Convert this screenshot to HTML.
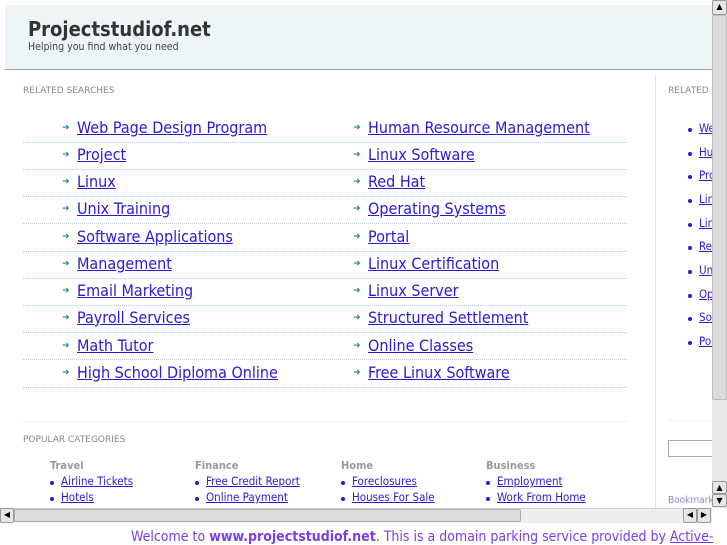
<!DOCTYPE html>
<html><head><style>
*{margin:0;padding:0;box-sizing:border-box}
body{width:727px;height:545px;overflow:hidden;background:#fff;font-family:"DejaVu Sans","Liberation Sans",sans-serif;position:relative}
.a{position:absolute;white-space:nowrap}
.c{font-family:"DejaVu Sans Condensed","DejaVu Sans",sans-serif}
.hdr{left:5px;top:5px;width:707px;height:65px;background:#eef5f7;border-bottom:1px solid #8fa3cf}
.lk{color:#2a1bd0;text-decoration:underline;font-size:16px;font-weight:500;font-family:"DejaVu Sans Condensed","DejaVu Sans",sans-serif;margin-top:-1px}
.arr{color:#2a8a80;font-size:9px}
.sep{height:0;border-top:1px dotted #b8c8e6;left:23px;width:604px}
.lbl{font-size:9px;color:#888}
.sl{color:#2a1bd0;text-decoration:underline;font-size:11.5px;font-family:"DejaVu Sans Condensed","DejaVu Sans",sans-serif}
.dot{width:4px;height:4px;border-radius:50%;background:#2a1bd0}
.cat{font-size:11px;color:#999;font-weight:bold}
.btn{background:#e6e6e6;border:1px solid #999;border-radius:2px;font-size:8px;text-align:center;color:#000;line-height:12px}
</style></head><body>
<div class="a hdr"></div>
<div class="a c" style="left:28px;top:17px;font-size:20px;font-weight:bold;color:#333">Projectstudiof.net</div>
<div class="a c" style="left:28px;top:41px;font-size:10.5px;color:#444">Helping you find what you need</div>
<div class="a lbl" style="left:23px;top:86px">RELATED SEARCHES</div>
<div class="a" style="left:655px;top:75px;width:1px;height:433px;background:#dde4f2"></div>
<div class="a lbl" style="left:668px;top:86px">RELATED</div>

<div class="a sep" style="top:142px"></div><div class="a sep" style="top:169px"></div><div class="a sep" style="top:196px"></div><div class="a sep" style="top:223px"></div><div class="a sep" style="top:251px"></div><div class="a sep" style="top:278px"></div><div class="a sep" style="top:305px"></div><div class="a sep" style="top:332px"></div><div class="a sep" style="top:359px"></div><div class="a sep" style="top:387px"></div>
<div class="a sep" style="top:421px;border-top:1px solid #eef2f8"></div>

<div class="a arr" style="left:62px;top:123px">➜</div><div class="a lk" style="left:77px;top:119px">Web Page Design Program</div>
<div class="a arr" style="left:62px;top:150px">➜</div><div class="a lk" style="left:77px;top:146px">Project</div>
<div class="a arr" style="left:62px;top:177px">➜</div><div class="a lk" style="left:77px;top:173px">Linux</div>
<div class="a arr" style="left:62px;top:204px">➜</div><div class="a lk" style="left:77px;top:200px">Unix Training</div>
<div class="a arr" style="left:62px;top:232px">➜</div><div class="a lk" style="left:77px;top:228px">Software Applications</div>
<div class="a arr" style="left:62px;top:259px">➜</div><div class="a lk" style="left:77px;top:255px">Management</div>
<div class="a arr" style="left:62px;top:286px">➜</div><div class="a lk" style="left:77px;top:282px">Email Marketing</div>
<div class="a arr" style="left:62px;top:313px">➜</div><div class="a lk" style="left:77px;top:309px">Payroll Services</div>
<div class="a arr" style="left:62px;top:341px">➜</div><div class="a lk" style="left:77px;top:337px">Math Tutor</div>
<div class="a arr" style="left:62px;top:368px">➜</div><div class="a lk" style="left:77px;top:364px">High School Diploma Online</div>

<div class="a arr" style="left:353px;top:123px">➜</div><div class="a lk" style="left:368px;top:119px">Human Resource Management</div>
<div class="a arr" style="left:353px;top:150px">➜</div><div class="a lk" style="left:368px;top:146px">Linux Software</div>
<div class="a arr" style="left:353px;top:177px">➜</div><div class="a lk" style="left:368px;top:173px">Red Hat</div>
<div class="a arr" style="left:353px;top:204px">➜</div><div class="a lk" style="left:368px;top:200px">Operating Systems</div>
<div class="a arr" style="left:353px;top:232px">➜</div><div class="a lk" style="left:368px;top:228px">Portal</div>
<div class="a arr" style="left:353px;top:259px">➜</div><div class="a lk" style="left:368px;top:255px">Linux Certification</div>
<div class="a arr" style="left:353px;top:286px">➜</div><div class="a lk" style="left:368px;top:282px">Linux Server</div>
<div class="a arr" style="left:353px;top:313px">➜</div><div class="a lk" style="left:368px;top:309px">Structured Settlement</div>
<div class="a arr" style="left:353px;top:341px">➜</div><div class="a lk" style="left:368px;top:337px">Online Classes</div>
<div class="a arr" style="left:353px;top:368px">➜</div><div class="a lk" style="left:368px;top:364px">Free Linux Software</div>

<div class="a dot" style="left:688px;top:128px"></div><div class="a sl" style="left:699px;top:121px">Web</div>
<div class="a dot" style="left:688px;top:152px"></div><div class="a sl" style="left:699px;top:145px">Hum</div>
<div class="a dot" style="left:688px;top:175px"></div><div class="a sl" style="left:699px;top:168px">Proj</div>
<div class="a dot" style="left:688px;top:199px"></div><div class="a sl" style="left:699px;top:192px">Linu</div>
<div class="a dot" style="left:688px;top:223px"></div><div class="a sl" style="left:699px;top:216px">Linu</div>
<div class="a dot" style="left:688px;top:246px"></div><div class="a sl" style="left:699px;top:239px">Red</div>
<div class="a dot" style="left:688px;top:270px"></div><div class="a sl" style="left:699px;top:263px">Unix</div>
<div class="a dot" style="left:688px;top:294px"></div><div class="a sl" style="left:699px;top:287px">Oper</div>
<div class="a dot" style="left:688px;top:317px"></div><div class="a sl" style="left:699px;top:310px">Soft</div>
<div class="a dot" style="left:688px;top:341px"></div><div class="a sl" style="left:699px;top:334px">Port</div>
<div class="a" style="left:668px;top:420px;width:44px;height:1px;background:#eef2f8"></div>
<div class="a" style="left:668px;top:440px;width:50px;height:17px;border:1px solid #aaa"></div>
<div class="a c" style="left:668px;top:495px;font-size:10px;color:#8a8ad0">Bookmark</div>

<div class="a lbl" style="left:23px;top:435px">POPULAR CATEGORIES</div>
<div class="a cat c" style="left:50px;top:459px">Travel</div>
<div class="a cat c" style="left:195px;top:459px">Finance</div>
<div class="a cat c" style="left:341px;top:459px">Home</div>
<div class="a cat c" style="left:486px;top:459px">Business</div>
<div class="a dot" style="left:50px;top:481px"></div><div class="a sl" style="left:61px;top:474px">Airline Tickets</div>
<div class="a dot" style="left:50px;top:497px"></div><div class="a sl" style="left:61px;top:490px">Hotels</div>
<div class="a dot" style="left:195px;top:481px"></div><div class="a sl" style="left:206px;top:474px">Free Credit Report</div>
<div class="a dot" style="left:195px;top:497px"></div><div class="a sl" style="left:206px;top:490px">Online Payment</div>
<div class="a dot" style="left:341px;top:481px"></div><div class="a sl" style="left:352px;top:474px">Foreclosures</div>
<div class="a dot" style="left:341px;top:497px"></div><div class="a sl" style="left:352px;top:490px">Houses For Sale</div>
<div class="a dot" style="left:486px;top:481px"></div><div class="a sl" style="left:497px;top:474px">Employment</div>
<div class="a dot" style="left:486px;top:497px"></div><div class="a sl" style="left:497px;top:490px">Work From Home</div>

<div class="a" style="left:712px;top:0;width:15px;height:508px;background:#e8e8e8"></div>
<div class="a btn" style="left:712px;top:0;width:15px;height:15px">▲</div>
<div class="a" style="left:712px;top:15px;width:15px;height:385px;background:#dcdcdc;border:1px solid #bbb;border-radius:2px"></div>
<div class="a btn" style="left:712px;top:481px;width:15px;height:13px">▲</div>
<div class="a btn" style="left:712px;top:494px;width:15px;height:13px">▼</div>

<div class="a" style="left:0;top:508px;width:712px;height:15px;background:#eee;border-top:1px solid #ccc"></div>
<div class="a btn" style="left:0;top:508px;width:14px;height:15px">◀</div>
<div class="a" style="left:14px;top:509px;width:507px;height:13px;background:#dcdcdc;border:1px solid #aaa;border-radius:2px"></div>
<div class="a btn" style="left:683px;top:508px;width:14px;height:15px">◀</div>
<div class="a btn" style="left:697px;top:508px;width:14px;height:15px">▶</div>

<div class="a c" style="left:131px;top:529px;font-size:14px;color:#7a3ee8">Welcome to <b>www.projectstudiof.net</b>. This is a domain parking service provided by <span style="text-decoration:underline">Active-</span></div>
</body></html>
